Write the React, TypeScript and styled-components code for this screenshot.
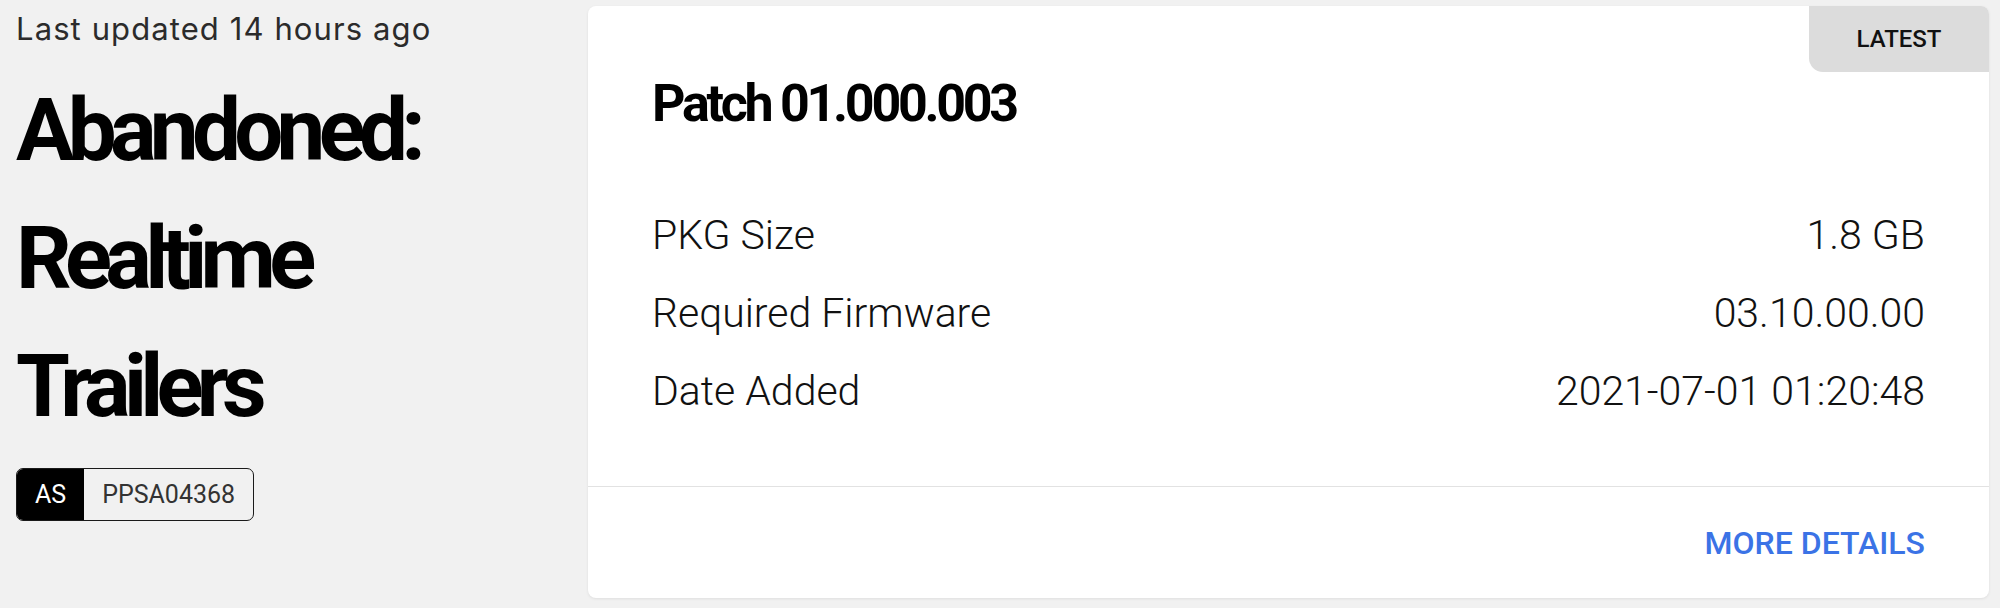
import React from 'react';
import styled, { createGlobalStyle } from 'styled-components';

const GlobalStyle = createGlobalStyle`
  html, body {
    margin: 0;
    padding: 0;
    background: #f1f1f1;
  }
  body {
    font-family: 'Roboto', 'Liberation Sans', sans-serif;
    color: #000;
  }
`;

interface PatchRow {
  label: string;
  value: string;
}

const rows: PatchRow[] = [
  { label: 'PKG Size', value: '1.8 GB' },
  { label: 'Required Firmware', value: '03.10.00.00' },
  { label: 'Date Added', value: '2021-07-01 01:20:48' }
];

export default function App() {
  return (
    <>
      <GlobalStyle />
      <Page>
        <InfoColumn>
          <Updated>Last updated 14 hours ago</Updated>
          <Title>
            Abandoned:
            <br />
            Realtime
            <br />
            Trailers
          </Title>
          <IdTag>
            <Region>AS</Region>
            <TitleId>PPSA04368</TitleId>
          </IdTag>
        </InfoColumn>

        <Card>
          <LatestBadge>LATEST</LatestBadge>
          <CardBody>
            <PatchName>Patch 01.000.003</PatchName>
            <Rows>
              {rows.map((row) => (
                <Row key={row.label}>
                  <span>{row.label}</span>
                  <span>{row.value}</span>
                </Row>
              ))}
            </Rows>
          </CardBody>
          <CardFooter>
            <MoreLink href="#">MORE DETAILS</MoreLink>
          </CardFooter>
        </Card>
      </Page>
    </>
  );
}

const Page = styled.div`
  display: grid;
  grid-template-columns: 540px 1fr;
  column-gap: 32px;
  padding: 6px 11px 10px 16px;
  min-height: 608px;
  box-sizing: border-box;
`;

const InfoColumn = styled.div`
  display: flex;
  flex-direction: column;
  align-items: flex-start;
  padding-top: 5px;
`;

const Updated = styled.div`
  font-family: 'Inter', 'Lato', sans-serif;
  font-size: 31px;
  line-height: 36px;
  color: #2b2b2b;
  letter-spacing: 1.1px;
`;

const Title = styled.h1`
  margin: 19px 0 0;
  font-family: 'Roboto', 'Liberation Sans', sans-serif;
  font-weight: 700;
  font-size: 87px;
  line-height: 128px;
  letter-spacing: -6.7px;
  color: #000;
`;

const IdTag = styled.div`
  display: flex;
  margin-top: 18px;
  height: 53px;
  border: 1.5px solid #1a1a1a;
  border-radius: 7px;
  overflow: hidden;
  box-sizing: border-box;
  font-size: 25px;
`;

const Region = styled.span`
  display: flex;
  align-items: center;
  padding: 0 18px;
  background: #000;
  color: #fff;
`;

const TitleId = styled.span`
  display: flex;
  align-items: center;
  padding: 0 18px;
  color: #333;
`;

const Card = styled.div`
  position: relative;
  background: #fff;
  border-radius: 8px;
  box-shadow: 0 1px 3px rgba(0, 0, 0, 0.08);
  display: flex;
  flex-direction: column;
  height: 592px;
`;

const LatestBadge = styled.div`
  position: absolute;
  top: 0;
  right: 0;
  width: 180px;
  height: 66px;
  display: flex;
  align-items: center;
  justify-content: center;
  background: #dcdcdc;
  border-radius: 0 8px 0 14px;
  font-size: 24px;
  font-weight: 500;
  color: #111;
`;

const CardBody = styled.div`
  padding: 66px 64px 56px;
  border-bottom: 1px solid #e2e2e2;
`;

const PatchName = styled.h2`
  margin: 0;
  font-size: 52px;
  line-height: 64px;
  font-weight: 700;
  letter-spacing: -3.3px;
`;

const Rows = styled.div`
  margin-top: 60px;
  display: flex;
  flex-direction: column;
`;

const Row = styled.div`
  display: flex;
  justify-content: space-between;
  font-size: 41px;
  font-weight: 300;
  line-height: 78px;
  color: #111;
`;

const CardFooter = styled.div`
  flex: 1;
  display: flex;
  justify-content: flex-end;
  align-items: center;
  padding: 0 64px;
`;

const MoreLink = styled.a`
  font-size: 32px;
  font-weight: 500;
  line-height: 40px;
  color: #3b73e6;
  text-decoration: none;
`;
